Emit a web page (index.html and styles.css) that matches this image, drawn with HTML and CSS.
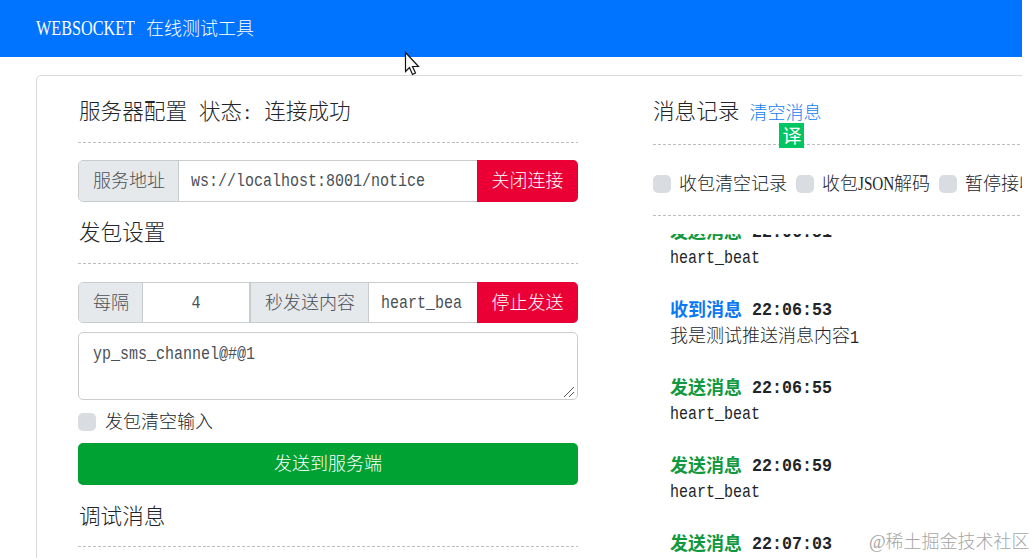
FILE: index.html
```html
<!DOCTYPE html>
<html lang="zh-CN">
<head>
<meta charset="utf-8">
<title>WEBSOCKET 在线测试工具</title>
<link rel="stylesheet" href="styles.css">
</head>
<body>
<div class="page">
  <header class="navbar"><span class="brand">WEBSOCKET</span><span class="brand-sub">在线测试工具</span></header>
  <main class="card">
    <section class="config">
      <h2 class="title status"><span>服务器配置</span><span>状态</span><span class="colon">:</span><span>连接成功</span></h2>
      <hr class="rule">
      <div class="group address">
        <span class="addon addr-label">服务地址</span>
        <span class="field grow"><span class="latin">ws://localhost:8001/notice</span></span>
        <button class="btn danger">关闭连接</button>
      </div>
      <h2 class="title">发包设置</h2>
      <hr class="rule">
      <div class="group timer">
        <span class="addon every">每隔</span>
        <span class="field seconds"><span class="latin">4</span></span>
        <span class="addon content-label">秒发送内容</span>
        <span class="field grow"><span class="latin">heart_bea</span></span>
        <button class="btn danger">停止发送</button>
      </div>
      <div class="textarea"><span class="latin">yp_sms_channel@#@1</span>
        <svg class="grip" width="12" height="12" viewBox="0 0 12 12"><path d="M1 11L11 1M6 11L11 6"/></svg>
      </div>
      <label class="check send-check"><i class="box"></i><span>发包清空输入</span></label>
      <button class="btn success">发送到服务端</button>
      <h2 class="title debug">调试消息</h2>
      <hr class="rule">
    </section>
    <section class="messages">
      <h2 class="title record"><span>消息记录</span><a class="clear">清空消息<span class="translate">译</span></a></h2>
      <hr class="rule">
      <div class="checks">
        <label class="check"><i class="box"></i><span>收包清空记录</span></label>
        <label class="check"><i class="box"></i><span>收包</span><span class="json">JSON</span><span>解码</span></label>
        <label class="check"><i class="box"></i><span>暂停接收</span></label>
      </div>
      <hr class="rule">
      <div class="log">
        <div class="entry first"><p class="head"><b class="sent">发送消息</b><b class="time">22:06:51</b></p><p class="latin">heart_beat</p></div>
        <div class="entry"><p class="head"><b class="received">收到消息</b><b class="time">22:06:53</b></p><p class="text">我是测试推送消息内容<span class="latin">1</span></p></div>
        <div class="entry"><p class="head"><b class="sent">发送消息</b><b class="time">22:06:55</b></p><p class="latin">heart_beat</p></div>
        <div class="entry"><p class="head"><b class="sent">发送消息</b><b class="time">22:06:59</b></p><p class="latin">heart_beat</p></div>
        <div class="entry"><p class="head"><b class="sent">发送消息</b><b class="time">22:07:03</b></p></div>
      </div>
    </section>
  </main>
</div>
<svg class="cursor" width="17" height="26" viewBox="0 0 17 26"><path d="M1.5 1.5V20.5L5.5 16.5L8.5 23.5L11.5 22L8.5 15.5H14.5Z"/></svg>
<div class="watermark">@稀土掘金技术社区</div>
</body>
</html>
```
FILE: styles.css
```css
* { box-sizing: border-box; }
body { margin: 0; width: 1036px; height: 558px; overflow: hidden; position: relative; background: #fff; color: #212529; font: 300 18px/26px "Liberation Serif", "Noto Sans CJK SC", sans-serif; }
p, h2 { margin: 0; font-weight: inherit; }
.page { width: 1022px; height: 558px; overflow: hidden; white-space: nowrap; }
.navbar { height: 57px; padding-left: 36px; display: flex; align-items: center; background: #0073ff; color: #fff; }
.brand { width: 110px; font-size: 21.6px; line-height: 26px; padding-bottom: 2px; transform: scaleX(.75); transform-origin: 0 50%; }
.brand-sub { padding-top: 1px; }
.card { margin: 18px 0 0 36px; width: 1040px; height: 560px; padding: 22px 0 0 41px; border: 1px solid #d8dadc; border-radius: 5px; display: flex; }
.config { width: 500px; margin-right: 75px; flex: none; }
.messages { width: 400px; flex: none; }
.title { height: 26px; font-size: 21.6px; line-height: 28px; margin-bottom: 18px; padding-left: 1px; }
.status { display: flex; }
.status > span:first-child { margin-right: 12px; }
.colon { width: 22px; padding-left: 2px; }
.rule { margin: 0; height: 1px; border: 0; background: repeating-linear-gradient(90deg, #bcbfc1 0 3px, transparent 3px 4.98px); }
.group { display: flex; height: 42px; border: 1px solid #c8cccf; border-radius: 5px; color: #495057; }
.address { margin: 17px 0; }
.timer { height: 41px; margin: 18px 0 9px; }
.addon, .field { display: flex; align-items: center; flex: none; border-right: 1px solid #c8cccf; }
.addon { background: #e6e9ec; padding-left: 14px; }
.addon:first-child { border-radius: 4px 0 0 4px; }
.addr-label { width: 100px; }
.every { width: 64px; }
.content-label { width: 118px; }
.seconds { width: 108px; justify-content: center; border-right-width: 2px; }
.field.grow { flex: 1; padding-left: 12px; border-right: 0; }
.btn { border: 0; padding: 0; color: #fff; font: inherit; display: flex; align-items: center; justify-content: center; }
.danger { width: 101px; margin: -1px; background: #eb0036; border-radius: 0 5px 5px 0; }
.success { width: 500px; height: 42px; background: #00a233; border-radius: 5px; margin-bottom: 18px; }
.latin { display: inline-block; font-family: "Liberation Mono", monospace; font-size: 15px; transform: translateY(1px) scaleY(1.17); }
.entry > .latin { display: block; }
.text { height: 26px; }
.text .latin { line-height: 18px; transform: scaleY(1.17); }
.textarea { height: 68px; padding: 6px 14px; border: 1px solid #c8cccf; border-radius: 5px; color: #495057; position: relative; line-height: 24px; }
.grip { position: absolute; right: 2px; bottom: 1px; stroke: #555; fill: none; }
.check { display: flex; align-items: center; }
.box { width: 18px; height: 18px; flex: none; margin-right: 8px; border-radius: 5px; background: #d9dde1; }
.send-check { height: 43px; }
.send-check .box { margin-right: 9px; }
.debug { margin-bottom: 17px; }
.record { display: flex; margin-bottom: 20px; padding-left: 0; }
.clear { position: relative; color: #147df0; font-size: 18px; line-height: 30px; margin-left: 10px; }
.translate { position: absolute; left: 30px; top: 25px; width: 25px; height: 25px; background: #00c563; color: #fff; font-size: 19px; font-weight: 400; line-height: 27px; text-align: center; }
.checks { display: flex; gap: 9px; height: 70px; padding-top: 8px; }
.checks .check { height: 62px; }
.json { width: 36px; font-size: 19px; transform: scaleX(.8); transform-origin: 0 50%; }
.log { height: 330px; margin-top: 18px; padding-left: 17px; overflow: hidden; }
.entry { height: 78px; }
.first { margin-top: -15px; }
.head { display: flex; }
.head b { font-weight: 700; }
.sent { width: 82px; color: #119940; }
.received { width: 82px; color: #0b78f5; }
.time { font-family: "Liberation Mono", monospace; font-size: 16.67px; transform: translateY(.5px) scaleY(1.08); }
.cursor { position: absolute; left: 404px; top: 51px; fill: #fff; stroke: #111; stroke-width: 1.2; }
.watermark { position: absolute; left: 869px; top: 529px; color: #a5a5a5; font-size: 18px; white-space: nowrap; }
```
